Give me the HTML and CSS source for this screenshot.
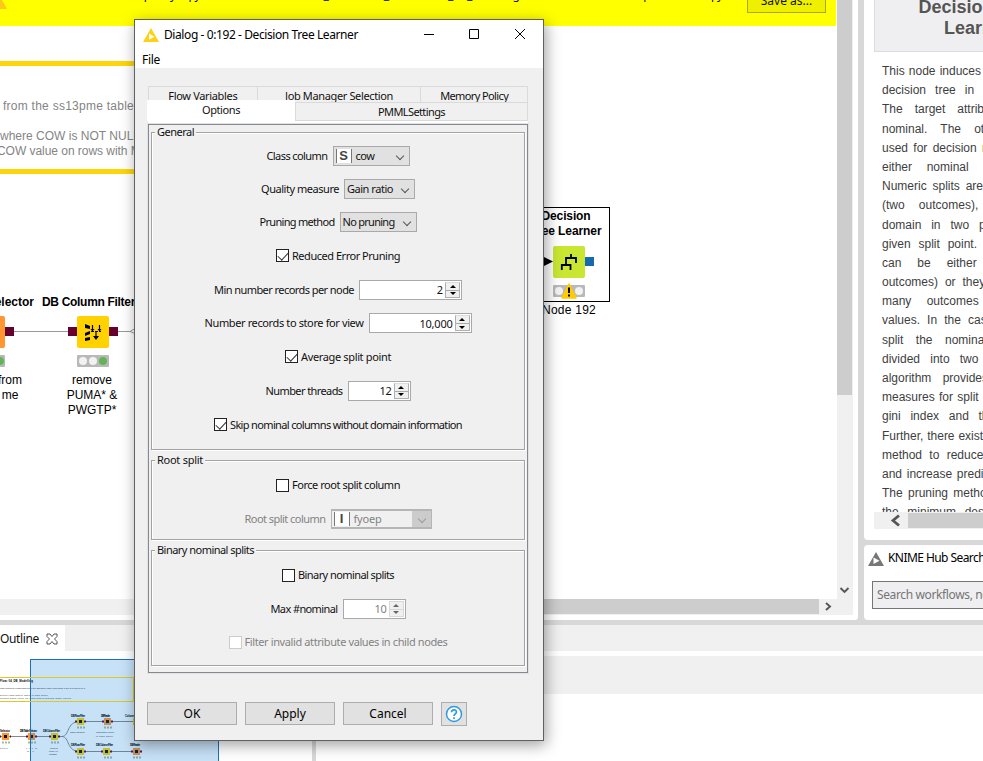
FILE: index.html
```html
<!DOCTYPE html>
<html lang="en">
<head>
<meta charset="utf-8">
<title>Dialog - 0:192 - Decision Tree Learner</title>
<link rel="stylesheet" href="styles.css">
</head>
<body>
<div class="app">
  <div class="upper">
    <section class="editor">
      <div class="editor-main">
        <div class="notice">
          <span class="notice-text" data-w="638">This is a temporary copy of "knime://EXAMPLES/40_Partners/01_Microsoft/04_DB_Modelling". Use "Save as..." to save a permanent copy.</span>
          <button class="save-as">Save as...</button>
          <svg class="notice-icon" width="8" height="10"><path d="M0 0H2L7 9H0Z" fill="#ffc71a"/></svg>
        </div>
        <div class="canvas">
          <div class="annotation">
            <p class="a1" data-w="131">from the ss13pme table</p>
            <p class="a2" data-w="140">where COW is NOT NULL</p>
            <p class="a3" data-w="147">COW value on rows with MI</p>
          </div>
          <svg class="graph" width="836" height="573" viewBox="0 26 836 573">
            <path d="M14 331.500H68M118 331.500H130L136 328M130 331.500L136 334" stroke="#999" fill="none"/>
            <rect x="-20" y="316" width="25" height="32" rx="2" fill="#ff9632"/>
            <path d="M5 327h9v9H5zM68 327h9v9h-9zM109 327h9v9h-9z" fill="#66002c"/>
            <rect x="77" y="316" width="32" height="32" rx="2" fill="#ffd200"/>
            <path d="M85 324l5 2v3l-5-1zM85 333l5-2v3l-5 2zM85 338l5-1v3l-5 1z" fill="#000"/>
            <path d="M92.500 325v5M99.500 325v5M96 331v7" stroke="#000" stroke-width="1.200"/>
            <path d="M90.500 329h4l-2 2.500zM97.500 329h4l-2 2.500zM93 336h6l-3 4z" fill="#000"/>
            <path d="M91 331.500h10" stroke="#000" stroke-dasharray="3 1"/>
            <rect x="-20" y="355" width="25" height="12" rx="1" fill="#b9b9b9"/>
            <circle cx="0" cy="361" r="4" fill="#61b557"/>
            <rect x="77" y="355" width="32" height="12" rx="1" fill="#b9b9b9"/>
            <circle cx="83" cy="361" r="4" fill="#f2f2f2"/><circle cx="93" cy="361" r="4" fill="#f2f2f2"/><circle cx="103" cy="361" r="4" fill="#61b557"/>
            <rect x="500.500" y="207.500" width="109" height="94" fill="none" stroke="#000"/>
            <path d="M544 257l9 4.500-9 4.500z"/>
            <rect x="553" y="246" width="32" height="32" rx="2" fill="#c8e632"/>
            <path d="M561.800 270V265H570.500V270M566 265V258H576V263M571 258V254" fill="none" stroke="#000" stroke-width="1.800"/>
            <rect x="585" y="257" width="9" height="9" fill="#1469af"/>
            <rect x="553" y="285" width="32" height="12" rx="1" fill="#b9b9b9"/>
            <circle cx="559" cy="291" r="4" fill="#f2f2f2"/><circle cx="579" cy="291" r="4" fill="#f2f2f2"/>
            <path d="M569 284l7 14h-14z" fill="#fc0" stroke="#fc0" stroke-width="1.500" stroke-linejoin="round"/>
            <path d="M569 287.500v5.500M569 294.500v2" stroke="#000" stroke-width="2"/>
          </svg>
          <b class="node-label n1">Selector</b>
          <b class="node-label n2" data-w="93">DB Column Filter</b>
          <span class="node-label n3">from<br>me</span>
          <span class="node-label n4">remove<br>PUMA* &amp;<br>PWGTP*</span>
          <b class="node-label n5"><span data-w="49">Decision</span><br><span data-w="71">Tree Learner</span></b>
          <span class="node-label n6" data-w="54">Node 192</span>
        </div>
        <div class="hscroll"><div class="hthumb"></div><svg width="17" height="15"><path d="M6 4l4 3.500-4 3.500" fill="none" stroke="#555" stroke-width="1.900"/></svg></div>
      </div>
      <div class="vscroll"><div class="vthumb"></div><svg width="16" height="15"><path d="M3.500 5l4 4 4-4" fill="none" stroke="#555" stroke-width="1.900"/></svg></div>
    </section>
    <aside class="side">
      <section class="description">
        <h1>Decision Tree Learner</h1>
        <div class="doc">
          <p>This node induces a classification</p><p>decision tree in main memory.</p><p>The target attribute must be</p><p>nominal. The other attributes</p><p>used for decision making can be</p><p>either nominal or numerical.</p><p>Numeric splits are always binary</p><p>(two outcomes), dividing the</p><p>domain in two partitions at a</p><p>given split point. Nominal splits</p><p>can be either binary (two</p><p>outcomes) or they can have as</p><p>many outcomes as nominal</p><p>values. In the case of a binary</p><p>split the nominal values are</p><p>divided into two subsets. The</p><p>algorithm provides two quality</p><p>measures for split calculation; the</p><p>gini index and the gain ratio.</p><p>Further, there exist a post pruning</p><p>method to reduce the tree size</p><p>and increase prediction accuracy.</p><p>The pruning method is based on</p><p>the minimum description length</p>
        </div>
        <div class="side-scroll"><svg width="34" height="17"><path d="M25 3.500l-6 5 6 5" fill="none" stroke="#555" stroke-width="2.800"/></svg><div class="side-thumb"></div></div>
      </section>
      <section class="hub">
        <div class="hub-title"><svg width="16" height="14"><path fill-rule="evenodd" d="M8 0l8 14H0zM5.500 5.500v6.500l6-3.200z" fill="#777"/></svg><span data-w="97">KNIME Hub Search</span></div>
        <div class="hub-search"><span data-w="131">Search workflows, nodes</span></div>
      </section>
    </aside>
  </div>
  <div class="lower">
    <section class="outline">
      <div class="tabbar"><div class="tab"><span data-w="39">Outline</span><svg width="12" height="12" viewBox="0 0 12 12"><path d="M1 1h3l2 2.500L8 1h3v2.500L8.500 6 11 8.500V11H8L6 8.500 4 11H1V8.500L3.500 6 1 3.500z" fill="#fff" stroke="#555"/></svg></div></div>
      <svg class="minimap" width="312" height="110" viewBox="0 651 312 110">
        <g stroke="#888" fill="none"><path d="M0 736.500H62C70 736 66 721.500 80 721.500H136M62 736.500C70 737 66 751.500 80 751.500H136"/></g>
        <g fill="#ff9632"><path d="M2 733h7v7H2zM28 733h7v7h-7zM104 718h7v7h-7zM133 748h7v7h-7z"/></g>
        <g fill="#ffd200"><path d="M51 733h7v7h-7zM77 718h7v7h-7zM77 748h7v7h-7zM103 748h7v7h-7zM133 718h7v7h-7z"/></g>
        <g fill="#111"><path d="M4 735h3v3H4zM30 735h3v3h-3zM53 735h3v3h-3zM79 720h3v3h-3zM106 720h3v3h-3zM79 750h3v3h-3zM105 750h3v3h-3zM135 750h3v3h-3z"/></g>
        <path d="M0 736.500h1M10 736.500h1M26 736.500h2M35 736.500h2M49 736.500h2M58 736.500h2M75 721.500h2M84 721.500h2M102 721.500h2M111 721.500h2M75 751.500h2M84 751.500h2M101 751.500h2M110 751.500h2M131 751.500h2M140 751.500h2" stroke="#66002c" stroke-width="2"/>
        <g class="mini-b"><text x="0" y="682" textLength="33">Flow: 04_DB_Modelling</text><text x="0" y="732" textLength="10">Selector</text><text x="20" y="732" textLength="17">DB Table Selector</text><text x="43" y="732" textLength="17">DB Column Filter</text><text x="71" y="717" textLength="14">DB Row Filter</text><text x="101" y="717" textLength="9">DB Reader</text><text x="125" y="717" textLength="16">Column Filter</text><text x="71" y="746" textLength="14">DB Row Filter</text><text x="96" y="746" textLength="17">DB Column Filter</text><text x="130" y="746" textLength="10">DB Reader</text></g>
        <g class="mini"><text x="0" y="688.500" textLength="85">This workflow reads data from the ss13pme table and trains a set of models on it</text><text x="0" y="695.500" textLength="48">select rows where COW is NOT NULL</text><text x="0" y="698.500" textLength="71">predict COW value on rows with MISSING COW values</text><text x="0" y="749" textLength="8">table</text><text x="26" y="749" textLength="11">from</text><text x="27" y="752" textLength="7">me</text><text x="50" y="749" textLength="8">remove</text><text x="49" y="752" textLength="9">PUMA* &amp;</text><text x="49" y="755" textLength="8">PWGTP*</text><text x="70" y="733" textLength="15">COW not NULL</text><text x="96" y="733" textLength="18">rows where COW</text><text x="96" y="737" textLength="17">is NOT NULL</text></g>
        <path d="M2 742.500h8M28 742.500h8M51 742.500h8M77 727.500h8M104 727.500h8M77 757.500h8M104 757.500h8M133 757.500h8" stroke="#a9b9a4" stroke-width="2" stroke-dasharray="2 1"/>
        <rect x="30.500" y="659.500" width="188" height="120" fill="#0078d4" fill-opacity=".22" stroke="#1d70b8"/>
        <path d="M-2 677.500H133.500V701.500H-2" fill="none" stroke="#dcc820"/>
      </svg>
    </section>
    <section class="console"><div class="console-tabs"></div><div class="console-tools"></div></section>
  </div>
</div>

<main class="dialog">
  <header class="titlebar">
    <svg width="16" height="14"><path fill-rule="evenodd" d="M8 0l8 14H0zM6 5.500v6.200l5.500-3z" fill="#fcd116"/></svg>
    <span class="title" data-w="194">Dialog - 0:192 - Decision Tree Learner</span>
    <svg class="window-buttons" width="102" height="12"><path d="M0 6.500H10M45.500 1.500H54.500V10.500H45.500ZM91 1L101 11M101 1L91 11" fill="none" stroke="#000"/></svg>
  </header>
  <nav class="menu"><span data-w="18">File</span></nav>
  <div class="tabs">
    <div class="tabs-back"><div><span data-w="69">Flow Variables</span></div><div><span data-w="108">Job Manager Selection</span></div><div><span data-w="68">Memory Policy</span></div></div>
    <div class="tabs-front"><div class="active"><span data-w="38">Options</span></div><div class="pmml"><span data-w="67">PMMLSettings</span></div></div>
    <div class="pane">
      <fieldset class="general">
        <legend><span data-w="37">General</span></legend>
        <div class="row"><span data-w="61">Class column</span><div class="combo w77"><b class="type">S</b><span data-w="19">cow</span><i class="chev"></i></div></div>
        <div class="row"><span data-w="78">Quality measure</span><div class="combo w71"><span data-w="46">Gain ratio</span><i class="chev"></i></div></div>
        <div class="row"><span data-w="75">Pruning method</span><div class="combo w77"><span data-w="52">No pruning</span><i class="chev"></i></div></div>
        <div class="row check r34"><i class="box on"></i><span data-w="108">Reduced Error Pruning</span></div>
        <div class="row r34"><span data-w="140">Min number records per node</span><div class="spin w103"><span>2</span><i class="arrows"><i></i><i></i></i></div></div>
        <div class="row"><span data-w="159">Number records to store for view</span><div class="spin w103"><span data-w="33">10,000</span><i class="arrows"><i></i><i></i></i></div></div>
        <div class="row check r34"><i class="box on"></i><span data-w="90">Average split point</span></div>
        <div class="row r34"><span data-w="77">Number threads</span><div class="spin w63"><span data-w="12">12</span><i class="arrows"><i></i><i></i></i></div></div>
        <div class="row check r34"><i class="box on"></i><span data-w="232">Skip nominal columns without domain information</span></div>
      </fieldset>
      <fieldset class="root">
        <legend><span data-w="46">Root split</span></legend>
        <div class="row check"><i class="box"></i><span data-w="108">Force root split column</span></div>
        <div class="row r34 off"><span data-w="81">Root split column</span><div class="combo w101"><b class="type">I</b><span data-w="28">fyoep</span><i class="chev"></i></div></div>
      </fieldset>
      <fieldset class="binary">
        <legend><span data-w="97">Binary nominal splits</span></legend>
        <div class="row check"><i class="box"></i><span data-w="96">Binary nominal splits</span></div>
        <div class="row r34"><span data-w="67">Max #nominal</span><div class="spin w63 off"><span data-w="12">10</span><i class="arrows"><i></i><i></i></i></div></div>
        <div class="row check off"><i class="box"></i><span data-w="203">Filter invalid attribute values in child nodes</span></div>
      </fieldset>
    </div>
  </div>
  <footer class="buttons">
    <button>OK</button><button>Apply</button><button>Cancel</button>
    <button class="help"><svg width="18" height="18"><circle cx="9" cy="9" r="7.500" fill="#fff" stroke="#2e9be0" stroke-width="1.500"/><path d="M6.500 7.300C6.500 4 11.500 4 11.500 7C11.500 8.800 9 8.700 9 11M9 12.200V14" fill="none" stroke="#2e9be0" stroke-width="1.700"/></svg></button>
  </footer>
</main>
<script src="fit.js"></script>
</body>
</html>
```
FILE: fit.js
```js
// Tracks each label so that it takes up its design width.
document.querySelectorAll('[data-w]').forEach(function (el) {
  var target = Number(el.dataset.w);
  var range = document.createRange();
  range.selectNodeContents(el);
  var natural = range.getBoundingClientRect().width;
  el.style.letterSpacing = (target - natural) / el.textContent.length + 'px';
});
```
FILE: styles.css
```css
* { box-sizing: border-box; }
body { margin: 0; width: 983px; height: 761px; overflow: hidden; position: relative; background: #fff; color: #111; font: 12px "Noto Sans", "Open Sans", sans-serif; }
p, h1 { margin: 0; }
i { font-style: normal; }
svg { display: block; flex: none; }
button { font: inherit; color: inherit; padding: 0; }
span { white-space: nowrap; }

.app { display: flex; flex-direction: column; height: 761px; }
.upper { display: flex; height: 625px; background: #d8d8d8; gap: 5px; padding-bottom: 5px; }
.editor { display: flex; width: 858px; height: 620px; background: #fff; padding-bottom: 5px; border-bottom-right-radius: 3px; flex: none; }
.editor-main { width: 837px; display: flex; flex-direction: column; overflow: hidden; }
.notice { position: relative; height: 26px; width: 836px; background: #ff0; overflow: hidden; display: flex; flex: none; }
.notice-text { position: absolute; left: 86px; top: -13px; line-height: 16px; }
.notice-icon { position: absolute; left: 0; top: 0; }
.save-as { position: absolute; left: 747px; top: -12px; width: 79px; height: 25px; background: #efef00; border: 1px solid #aaa61a; line-height: 22px; }
.canvas { position: relative; height: 573px; flex: none; overflow: hidden; }
.annotation { width: 400px; height: 113px; margin-top: 35px; border: solid #fcd60a; border-width: 5px 0; color: #848484; font: 12px/15px "Liberation Sans", sans-serif; white-space: nowrap; padding-top: 33px; }
.annotation p { width: max-content; }
.a1 { margin-left: 3px; }
.a2 { margin-top: 15px; }
.a3 { margin-left: -3px; }
.graph { position: absolute; left: 0; top: 0; }
.node-label { position: absolute; font-family: "Liberation Sans", sans-serif; font-size: 12px; line-height: 15px; text-align: center; color: #000; white-space: nowrap; }
.n1 { right: 803px; top: 269px; }
.n2 { left: 42px; top: 269px; }
.n3 { left: -2px; top: 347px; }
.n4 { left: 62px; width: 60px; top: 347px; }
.n5 { left: 516px; width: 100px; top: 183px; }
.n6 { left: 542px; top: 277px; }
.hscroll { display: flex; justify-content: space-between; height: 16px; background: #f0f0f0; }
.hthumb { width: 819px; height: 15px; background: linear-gradient(90deg, #f0f0f0 136px, #cdcdcd 136px); }
.vscroll { width: 16px; height: 615px; background: #f0f0f0; display: flex; flex-direction: column; justify-content: space-between; padding-bottom: 17px; }
.vthumb { height: 395px; width: 15px; background: #cdcdcd; }
.side { width: 119px; margin-left: 1px; display: flex; flex-direction: column; gap: 5px; overflow: hidden; }
.description { display: flex; flex-direction: column; height: 540px; background: #fff; border-radius: 0 0 0 4px; padding-left: 10px; overflow: hidden; flex: none; }
.description h1 { display: flex; align-items: flex-end; flex: none; height: 52px; width: 206px; border: 1px solid #dcdce0; border-top: 0; background: #efeff1; font: bold 18px/21px "Liberation Sans", sans-serif; color: #555; text-align: center; padding: 0 40px 12px; }
.doc { height: 460px; flex: none; padding: 10px 0 0 8px; width: 190px; overflow: hidden; font: 12px/19.200px "Liberation Sans", sans-serif; color: #3e3e3e; }
.doc p { text-align: justify; text-align-last: justify; white-space: nowrap; height: 19.200px; }
.side-scroll { display: flex; height: 17px; background: #f0f0f0; flex: none; }
.side-thumb { flex: 1; margin: 1px 0; background: #cdcdcd; }
.hub { height: 75px; background: #fff; border-radius: 4px 0 0 4px; }
.hub-title { display: flex; gap: 4px; align-items: center; padding: 2px 0 0 4px; height: 23px; color: #000; }
.hub-title svg { margin-top: 2px; }
.hub-search { margin: 13px 0 0 8px; width: 130px; height: 28px; border: 1px solid #757575; background: #efeff1; color: #757575; line-height: 26px; padding-left: 4px; font-size: 12px; }
.lower { display: flex; height: 136px; }
.outline { width: 312px; flex: none; }
.tabbar { height: 26px; background: #f0f0f0; }
.tab { width: 65px; height: 26px; background: #fff; display: flex; align-items: center; gap: 7px; padding-top: 1px; }
.minimap { overflow: hidden; }
.mini-b { font: bold 2.800px "Liberation Sans", sans-serif; fill: #000; }
.mini { font: 2.500px "Liberation Sans", sans-serif; fill: #333; }
.console { flex: 1; border-left: 4px solid #d8d8d8; }
.console-tabs { height: 26px; background: #f0f0f0; margin-bottom: 5px; }
.console-tools { height: 38px; background: #f0f0f0; }

.dialog { position: absolute; left: 134px; top: 19px; width: 410px; height: 722px; background: #f0f0f0; border: 1px solid #606060; box-shadow: 2px 4px 14px rgba(0, 0, 0, .38); display: flex; flex-direction: column; font-size: 11px; }
.titlebar { display: flex; align-items: center; height: 29px; background: #fff; padding-left: 8px; gap: 5px; font-size: 12px; color: #000; flex: none; }
.window-buttons { margin: -1px 17px 0 auto; }
.menu { height: 19px; background: #fff; padding-left: 7px; font-size: 12px; line-height: 22px; color: #000; flex: none; }
.tabs { margin: 18px 14px 0 12px; width: 382px; }
.tabs-back { display: flex; margin: 0 1px; height: 16px; border: solid #dadada; border-width: 1px 1px 0; line-height: 18px; text-align: center; overflow: hidden; }
.tabs-back div { width: 108px; }
.tabs-back div + div { width: 164px; border-left: 1px solid #dadada; }
.tabs-back div + div + div { width: 107px; }
.tabs-front { display: flex; height: 22px; margin-top: -2px; line-height: 20px; text-align: center; }
.active { width: 148px; height: 21px; background: #fff; }
.pmml { width: 233px; background: #f0f0f0; border: solid #dadada; border-width: 1px; margin-top: 2px; height: 19px; line-height: 17px; }
.pane { border: 1px solid #858990; outline: 1px solid #e2e2e2; margin: 2px 1px 0; height: 549px; padding: 7px 2px 0 2px; position: relative; box-shadow: 0 -3px 0 #fff; }
fieldset { position: relative; margin: 0; padding: 0; border: 1px solid #a3a3a3; box-shadow: 1px 1px 0 #fff, inset 1px 1px 0 #fff; min-width: 0; }
legend { position: absolute; top: -8px; left: 3px; padding: 0 2px; margin: 0; background: #f0f0f0; line-height: 14px; height: 14px; }
.general { height: 318px; padding-top: 6px; }
.root { height: 80px; margin-top: 10px; padding-top: 7px; }
.binary { height: 116px; margin-top: 10px; padding-top: 7px; }
.row { display: flex; align-items: center; justify-content: center; gap: 5px; height: 33px; }
.r34 { height: 34px; }
.check { gap: 3px; }
.combo, .spin { display: flex; align-items: center; height: 20px; border: 1px solid #a9a9a9; background: #e1e1e1; padding-left: 2px; }
.w63 { width: 63px; } .w71 { width: 71px; } .w77 { width: 77px; } .w101 { width: 101px; } .w103 { width: 103px; }
.type { width: 16px; height: 14px; background: #fff; border: solid #777; border-width: 0 1px; font: bold 13px/14px "Liberation Sans", sans-serif; color: #444; text-align: center; margin-right: 4px; }
.chev { width: 6px; height: 6px; border: solid #555; border-width: 0 1px 1px 0; transform: rotate(45deg); margin: 0 6px 0 auto; }
.box { width: 13px; height: 13px; border: 1px solid #222; background: #fff; flex: none; margin-top: 1px; }
.on::after { content: ""; display: block; width: 9px; height: 5px; border: solid #333; border-width: 0 0 1px 1px; transform: translate(1px, 2px) rotate(-47deg); }
.spin { background: #fff; justify-content: flex-end; gap: 2px; padding: 0; margin-top: 1px; }
.arrows { width: 15px; height: 16px; margin-right: 1px; display: flex; flex-direction: column; background: #f0f0f0; border: 1px solid #b0b0b0; border-top-color: #ddd; }
.arrows i { height: 7px; display: flex; align-items: center; justify-content: center; }
.arrows i::before { content: ""; border: solid transparent; border-width: 0 3px 3px; border-bottom-color: #000; }
.arrows i + i { border-top: 1px solid #a9a9a9; }
.arrows i + i::before { border-width: 3px 3px 0; border-top-color: #000; }
.off { color: #838383; }
.off .box { border-color: #ccc; }
.off .combo { background: linear-gradient(90deg, #f0f0f0 80px, #ccc 80px); border-width: 2px 1px; border-color: #b5b5b5; margin-top: 1px; }
.off .chev { border-color: #9a9a9a; }
.off .arrows { border-color: #d8d8d8; }
.off .arrows i + i { border-top-color: #d8d8d8; }
.off .arrows i::before { border-bottom-color: #666; }
.off .arrows i + i::before { border-top-color: #666; }
.buttons { display: flex; gap: 8px; margin: 29px 0 0 12px; font-size: 12px; color: #000; }
.buttons button { width: 90px; height: 23px; border: 1px solid #adadad; background: #e1e1e1; }
.buttons .help { width: 26px; height: 24px; display: flex; align-items: center; justify-content: center; }
```
